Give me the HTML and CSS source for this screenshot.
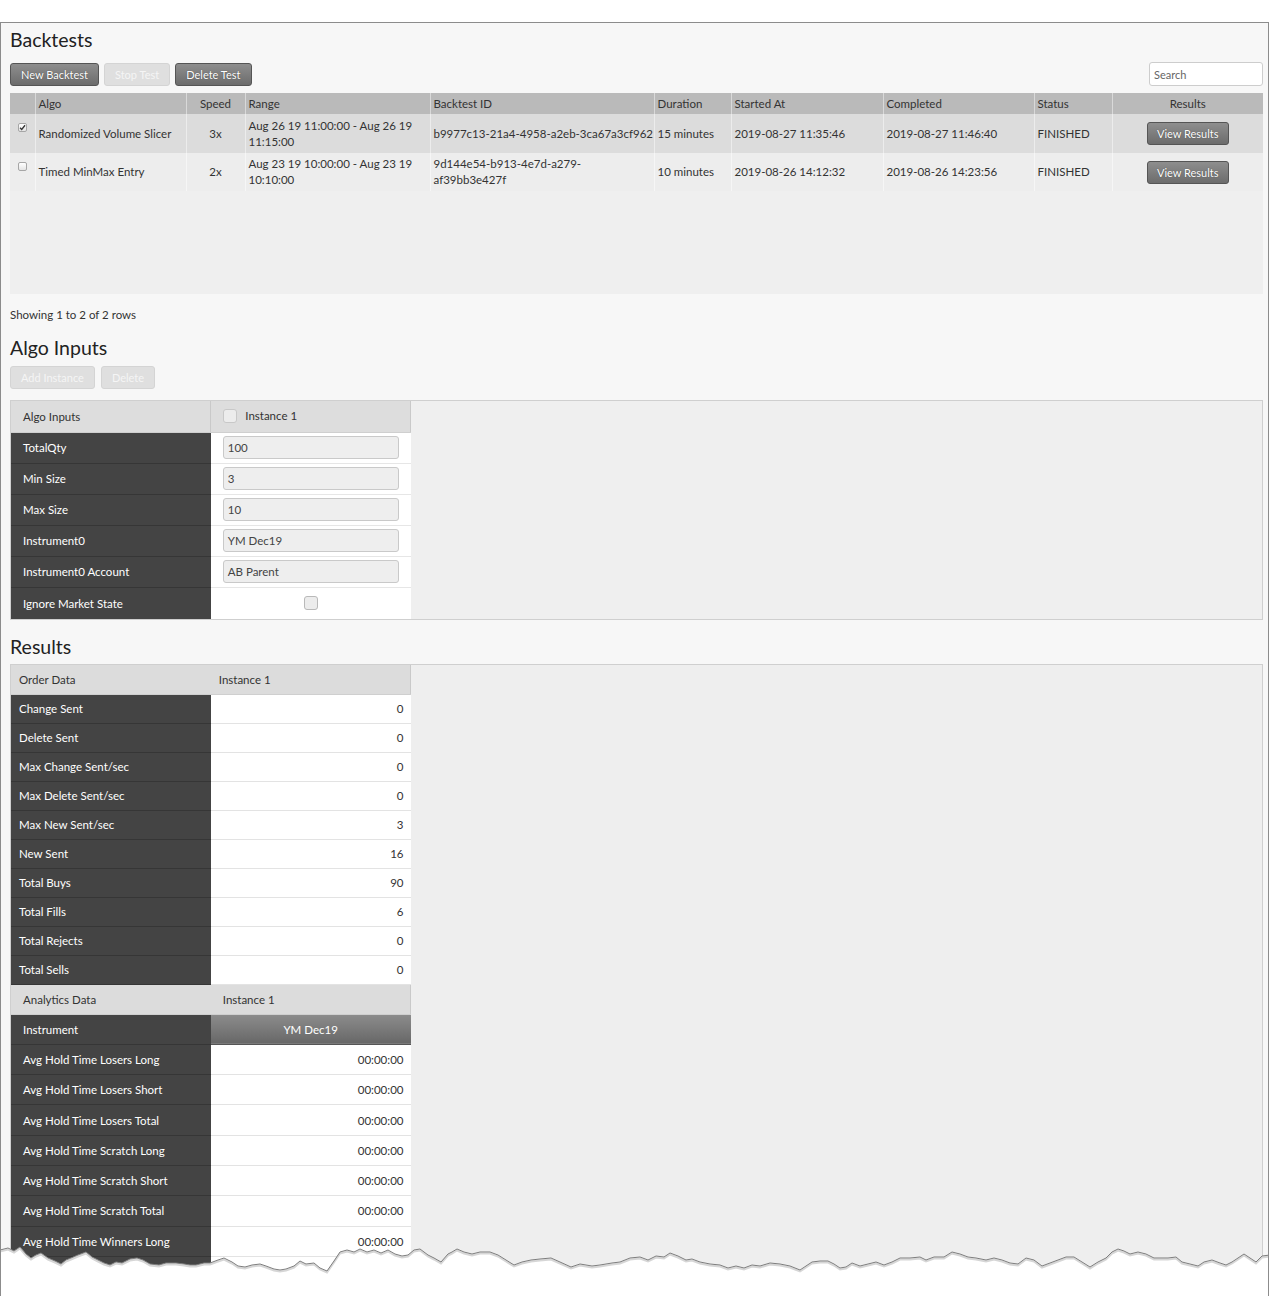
FILE: index.html
```html
<!DOCTYPE html>
<html>
<head>
<meta charset="utf-8">
<title>Backtests</title>
<link rel="stylesheet" href="styles.css">
</head>
<body>
<div class="sheet">

<h1 class="title">Backtests</h1>
<div class="toolbar">
  <div class="btns">
    <button class="btn">New Backtest</button>
    <button class="btn off">Stop Test</button>
    <button class="btn">Delete Test</button>
  </div>
  <input class="search" type="text" placeholder="Search">
</div>

<div class="grid-wrap">
<table class="grid">
  <colgroup>
    <col style="width:25px"><col style="width:151px"><col style="width:59px"><col style="width:185px"><col style="width:224px">
    <col style="width:77px"><col style="width:152px"><col style="width:151px"><col style="width:78px"><col style="width:151px">
  </colgroup>
  <tr>
    <th></th>
    <th>Algo</th>
    <th class="c">Speed</th>
    <th>Range</th>
    <th>Backtest ID</th>
    <th>Duration</th>
    <th>Started At</th>
    <th>Completed</th>
    <th>Status</th>
    <th class="c">Results</th>
  </tr>
  <tr class="sel">
    <td class="cb"><span class="tick"><svg width="7" height="7" viewBox="0 0 8 8"><path d="M1.2 4.2 L3.1 6.2 L6.9 1.4" fill="none" stroke="#333" stroke-width="1.5"/></svg></span></td>
    <td>Randomized Volume Slicer</td>
    <td class="c">3x</td>
    <td>Aug 26 19 11:00:00 - Aug 26 19 11:15:00</td>
    <td class="nw">b9977c13-21a4-4958-a2eb-3ca67a3cf962</td>
    <td>15 minutes</td>
    <td>2019-08-27 11:35:46</td>
    <td>2019-08-27 11:46:40</td>
    <td>FINISHED</td>
    <td class="c"><button class="btn view">View Results</button></td>
  </tr>
  <tr>
    <td class="cb"><span class="tick"></span></td>
    <td>Timed MinMax Entry</td>
    <td class="c">2x</td>
    <td>Aug 23 19 10:00:00 - Aug 23 19 10:10:00</td>
    <td>9d144e54-b913-4e7d-a279-<br>af39bb3e427f</td>
    <td>10 minutes</td>
    <td>2019-08-26 14:12:32</td>
    <td>2019-08-26 14:23:56</td>
    <td>FINISHED</td>
    <td class="c"><button class="btn view">View Results</button></td>
  </tr>
</table>
</div>

<p class="count">Showing 1 to 2 of 2 rows</p>

<h1 class="title sec">Algo Inputs</h1>
<div class="btns gap">
  <button class="btn off">Add Instance</button>
  <button class="btn off">Delete</button>
</div>

<div class="panel inputs">
<table class="params">
  <tr>
    <th>Algo Inputs</th>
    <th><span class="box"></span>Instance 1</th>
  </tr>
  <tr><td class="key">TotalQty</td><td class="val"><div class="field">100</div></td></tr>
  <tr><td class="key">Min Size</td><td class="val"><div class="field">3</div></td></tr>
  <tr><td class="key">Max Size</td><td class="val"><div class="field">10</div></td></tr>
  <tr><td class="key">Instrument0</td><td class="val"><div class="field">YM Dec19</div></td></tr>
  <tr><td class="key">Instrument0 Account</td><td class="val"><div class="field">AB Parent</div></td></tr>
  <tr class="last"><td class="key">Ignore Market State</td><td class="val mid"><span class="box"></span></td></tr>
</table>
</div>

<h1 class="title res">Results</h1>
<div class="panel results">
<table class="stats">
  <tr class="head"><th>Order Data</th><th>Instance 1</th></tr>
  <tr><td class="key">Change Sent</td><td class="num">0</td></tr>
  <tr><td class="key">Delete Sent</td><td class="num">0</td></tr>
  <tr><td class="key">Max Change Sent/sec</td><td class="num">0</td></tr>
  <tr><td class="key">Max Delete Sent/sec</td><td class="num">0</td></tr>
  <tr><td class="key">Max New Sent/sec</td><td class="num">3</td></tr>
  <tr><td class="key">New Sent</td><td class="num">16</td></tr>
  <tr><td class="key">Total Buys</td><td class="num">90</td></tr>
  <tr><td class="key">Total Fills</td><td class="num">6</td></tr>
  <tr><td class="key">Total Rejects</td><td class="num">0</td></tr>
  <tr><td class="key">Total Sells</td><td class="num">0</td></tr>
  <tr class="head wide"><th>Analytics Data</th><th>Instance 1</th></tr>
  <tr class="wide"><td class="key">Instrument</td><td class="inst">YM Dec19</td></tr>
  <tr class="wide"><td class="key">Avg Hold Time Losers Long</td><td class="num">00:00:00</td></tr>
  <tr class="wide"><td class="key">Avg Hold Time Losers Short</td><td class="num">00:00:00</td></tr>
  <tr class="wide"><td class="key">Avg Hold Time Losers Total</td><td class="num">00:00:00</td></tr>
  <tr class="wide"><td class="key">Avg Hold Time Scratch Long</td><td class="num">00:00:00</td></tr>
  <tr class="wide"><td class="key">Avg Hold Time Scratch Short</td><td class="num">00:00:00</td></tr>
  <tr class="wide"><td class="key">Avg Hold Time Scratch Total</td><td class="num">00:00:00</td></tr>
  <tr class="wide"><td class="key">Avg Hold Time Winners Long</td><td class="num">00:00:00</td></tr>
  <tr class="wide"><td class="key">Avg Hold Time Winners Short</td><td class="num">00:00:00</td></tr>
</table>
</div>

<!-- torn paper edge -->
<svg class="tear" width="1270" height="60" viewBox="0 0 1270 60">
  <path fill="#fff" d="M0,14 L8,12 14,15 20,11 26,18 31,22 36,19 41,17 48,22 55,25 61,28 66,24 71,22 78,19 86,16 92,21 98,24 104,27 110,29 116,26 122,27 130,23 137,22 143,24 150,28 159,29 166,27 176,27 184,28 190,29 196,29 204,27 210,27 218,24 224,22 232,26 238,30 245,31 252,29 260,28 266,30 274,33 280,34 286,33 294,30 300,25 306,28 314,27 320,32 327,35 334,25 340,16 347,14 354,16 360,13 367,16 374,14 381,17 388,14 395,18 402,20 408,19 414,14 420,13 428,19 434,22 441,26 448,18 452,16 457,13 464,16 472,18 480,16 490,16 498,19 506,24 514,29 522,26 531,24 540,23 551,22 560,26 571,31 580,28 592,30 600,29 612,27 620,26 630,22 640,21 648,24 656,20 664,21 670,17 678,20 686,24 692,23 700,26 710,28 720,29 728,32 736,30 744,32 752,29 760,30 770,27 780,28 790,30 800,34 806,30 812,26 820,25 828,25 834,28 840,32 846,31 852,27 860,30 868,28 876,26 884,29 892,26 900,22 910,22 920,21 926,24 934,21 944,21 952,16 960,18 968,21 976,22 986,24 994,22 1002,24 1010,27 1018,28 1026,22 1034,24 1042,30 1050,27 1058,24 1066,21 1074,21 1082,26 1090,31 1098,26 1106,22 1112,16 1118,13 1124,15 1130,18 1138,16 1146,18 1154,22 1160,22 1168,22 1176,21 1182,26 1190,28 1198,30 1204,26 1212,24 1220,27 1226,29 1232,26 1238,22 1244,18 1250,22 1256,26 1262,20 1270,19 L1270,60 L0,60 Z"/>
  <polyline class="shade" points="0,14 8,12 14,15 20,11 26,18 31,22 36,19 41,17 48,22 55,25 61,28 66,24 71,22 78,19 86,16 92,21 98,24 104,27 110,29 116,26 122,27 130,23 137,22 143,24 150,28 159,29 166,27 176,27 184,28 190,29 196,29 204,27 210,27 218,24 224,22 232,26 238,30 245,31 252,29 260,28 266,30 274,33 280,34 286,33 294,30 300,25 306,28 314,27 320,32 327,35 334,25 340,16 347,14 354,16 360,13 367,16 374,14 381,17 388,14 395,18 402,20 408,19 414,14 420,13 428,19 434,22 441,26 448,18 452,16 457,13 464,16 472,18 480,16 490,16 498,19 506,24 514,29 522,26 531,24 540,23 551,22 560,26 571,31 580,28 592,30 600,29 612,27 620,26 630,22 640,21 648,24 656,20 664,21 670,17 678,20 686,24 692,23 700,26 710,28 720,29 728,32 736,30 744,32 752,29 760,30 770,27 780,28 790,30 800,34 806,30 812,26 820,25 828,25 834,28 840,32 846,31 852,27 860,30 868,28 876,26 884,29 892,26 900,22 910,22 920,21 926,24 934,21 944,21 952,16 960,18 968,21 976,22 986,24 994,22 1002,24 1010,27 1018,28 1026,22 1034,24 1042,30 1050,27 1058,24 1066,21 1074,21 1082,26 1090,31 1098,26 1106,22 1112,16 1118,13 1124,15 1130,18 1138,16 1146,18 1154,22 1160,22 1168,22 1176,21 1182,26 1190,28 1198,30 1204,26 1212,24 1220,27 1226,29 1232,26 1238,22 1244,18 1250,22 1256,26 1262,20 1270,19"/>
  <polyline class="edge" points="0,14 8,12 14,15 20,11 26,18 31,22 36,19 41,17 48,22 55,25 61,28 66,24 71,22 78,19 86,16 92,21 98,24 104,27 110,29 116,26 122,27 130,23 137,22 143,24 150,28 159,29 166,27 176,27 184,28 190,29 196,29 204,27 210,27 218,24 224,22 232,26 238,30 245,31 252,29 260,28 266,30 274,33 280,34 286,33 294,30 300,25 306,28 314,27 320,32 327,35 334,25 340,16 347,14 354,16 360,13 367,16 374,14 381,17 388,14 395,18 402,20 408,19 414,14 420,13 428,19 434,22 441,26 448,18 452,16 457,13 464,16 472,18 480,16 490,16 498,19 506,24 514,29 522,26 531,24 540,23 551,22 560,26 571,31 580,28 592,30 600,29 612,27 620,26 630,22 640,21 648,24 656,20 664,21 670,17 678,20 686,24 692,23 700,26 710,28 720,29 728,32 736,30 744,32 752,29 760,30 770,27 780,28 790,30 800,34 806,30 812,26 820,25 828,25 834,28 840,32 846,31 852,27 860,30 868,28 876,26 884,29 892,26 900,22 910,22 920,21 926,24 934,21 944,21 952,16 960,18 968,21 976,22 986,24 994,22 1002,24 1010,27 1018,28 1026,22 1034,24 1042,30 1050,27 1058,24 1066,21 1074,21 1082,26 1090,31 1098,26 1106,22 1112,16 1118,13 1124,15 1130,18 1138,16 1146,18 1154,22 1160,22 1168,22 1176,21 1182,26 1190,28 1198,30 1204,26 1212,24 1220,27 1226,29 1232,26 1238,22 1244,18 1250,22 1256,26 1262,20 1270,19"/>
</svg>

</div>
</body>
</html>
```

FILE: styles.css
```css
* {
    box-sizing: border-box;
}
html, body {
    margin: 0;
    padding: 0;
    background: #fff;
}
body {
    font-family: Lato, "Open Sans", sans-serif;
    font-size: 11.5px;
    color: #333;
}

.sheet {
    position: relative;
    overflow: hidden;
    width: 1269px;
    height: 1274px;
    margin-top: 22px;
    padding: 5px 5px 0 9px;
    background: #f7f7f7;
    border: 1px solid #8c8c8c;
    border-bottom: none;
}

.title {
    margin: 0;
    font-size: 19.5px;
    font-weight: 400;
    line-height: 24px;
    color: #222;
}
.title.sec {
    margin-top: 14px;
}
.title.res {
    margin-top: 15px;
}

/* buttons */
.toolbar {
    display: flex;
    justify-content: space-between;
    align-items: flex-end;
    height: 24px;
    margin-top: 10px;
}
.btns {
    display: flex;
    gap: 5px;
}
.btns.gap {
    margin-top: 6px;
    gap: 6px;
}
.btn {
    height: 23px;
    padding: 0 10px;
    font-family: Lato, "Open Sans", sans-serif;
    font-size: 11px;
    color: #fff;
    text-shadow: 0 0 1px rgba(0,0,0,.5);
    background: linear-gradient(#8e8e8e, #6c6c6c);
    border: 1px solid #555;
    border-radius: 3px;
}
.btn.off {
    color: #f5f5f5;
    text-shadow: none;
    background: #dfdfdf;
    border-color: #d4d4d4;
}
.btn.view {
    width: 82px;
    padding: 0;
}
.search {
    width: 114px;
    height: 24px;
    padding: 0 4px;
    font-family: Lato, "Open Sans", sans-serif;
    font-size: 11px;
    background: #fff;
    border: 1px solid #cdcdcd;
    border-radius: 3px;
    outline: none;
}
.search::placeholder {
    color: #666;
}

/* backtests grid */
.grid-wrap {
    height: 201px;
    margin-top: 7px;
    background: #efefef;
}
.grid {
    width: 1253px;
    table-layout: fixed;
    border-collapse: collapse;
}
.grid th {
    height: 21px;
    padding: 0 3px;
    font-weight: 400;
    text-align: left;
    color: #333;
    background: #bababa;
    border-left: 1px solid #d9d9d9;
}
.grid th:first-child,
.grid td:first-child {
    border-left: none;
}
.grid td {
    padding: 3px 3px;
    line-height: 16px;
    vertical-align: middle;
    background: #ededed;
    border-left: 1px solid #f6f6f6;
}
.grid tr.sel td {
    height: 39px;
    background: #dcdcdc;
    border-left-color: #ececec;
}
.grid .c {
    text-align: center;
}
.grid .nw {
    white-space: nowrap;
}
.grid td.cb {
    padding: 9px 0 0 8px;
    vertical-align: top;
}
.tick {
    display: block;
    width: 9px;
    height: 9px;
    background: linear-gradient(#fff, #e4e4e4);
    border: 1px solid #a6a6a6;
    border-radius: 2px;
}
.tick svg {
    display: block;
}

.count {
    margin: 14px 0 0;
    line-height: 14px;
}

/* panels */
.panel {
    background: #efefef;
    border: 1px solid #cfcfcf;
}
.panel.inputs {
    height: 220px;
    margin-top: 11px;
}
.panel.results {
    margin-top: 5px;
    height: 700px;
    background: #eeeeee;
}
.params, .stats {
    border-collapse: collapse;
    table-layout: fixed;
    width: 400px;
}
.params th {
    height: 31px;
    padding: 0 12px;
    font-weight: 400;
    text-align: left;
    background: #dddddd;
    border-right: 1px solid #c9c9c9;
    border-bottom: 1px solid #cfcfcf;
}
.params td {
    height: 31px;
}
.params tr.last td {
    height: 32px;
    border-bottom: none;
}
.key {
    width: 200px;
    padding: 0 12px;
    color: #fff;
    background: #444;
    border-bottom: 1px solid #363636;
}
.val {
    padding: 0 12px;
    background: #fff;
    border-bottom: 1px solid #e6e6e6;
}
.val.mid {
    text-align: center;
}
.field {
    height: 23px;
    padding: 0 4px;
    line-height: 21px;
    color: #444;
    background: #eeeeee;
    border: 1px solid #c9c9c9;
    border-radius: 3px;
}
.box {
    display: inline-block;
    width: 14px;
    height: 14px;
    margin-right: 8px;
    vertical-align: -3px;
    background: #ececec;
    border: 1px solid #c8c8c8;
    border-radius: 3px;
}
.val.mid .box {
    margin-right: 0;
    border-color: #b9b9b9;
}

/* results */
.stats th {
    height: 29px;
    padding: 0 8px;
    font-weight: 400;
    text-align: left;
    background: #dcdcdc;
    border-bottom: 1px solid #cfcfcf;
}
.stats th:last-child {
    border-right: 1px solid #c9c9c9;
}
.stats td {
    height: 29px;
}
.stats .key {
    padding: 0 8px;
}
.stats .num {
    padding: 0 7px;
    text-align: right;
    color: #333;
    background: #fff;
    border-bottom: 1px solid #e3e3e3;
}
.stats tr.wide th,
.stats tr.wide td {
    height: 30px;
}
.stats tr.wide td.key,
.stats tr.wide td.num {
    height: 30.3px;
}
.stats tr.wide th,
.stats tr.wide .key {
    padding: 0 12px;
}
.stats td.inst {
    text-align: center;
    color: #fff;
    background: linear-gradient(#8c8c8c, #676767);
    border-bottom: 1px solid #555;
}

/* torn paper edge */
.tear {
    position: absolute;
    left: -1px;
    bottom: 0;
    display: block;
}
.tear .edge {
    fill: none;
    stroke: #7d7d7d;
    stroke-width: 1;
}
.tear .shade {
    fill: none;
    stroke: #d6d6d6;
    stroke-width: 2;
    transform: translateY(1.5px);
}
```
